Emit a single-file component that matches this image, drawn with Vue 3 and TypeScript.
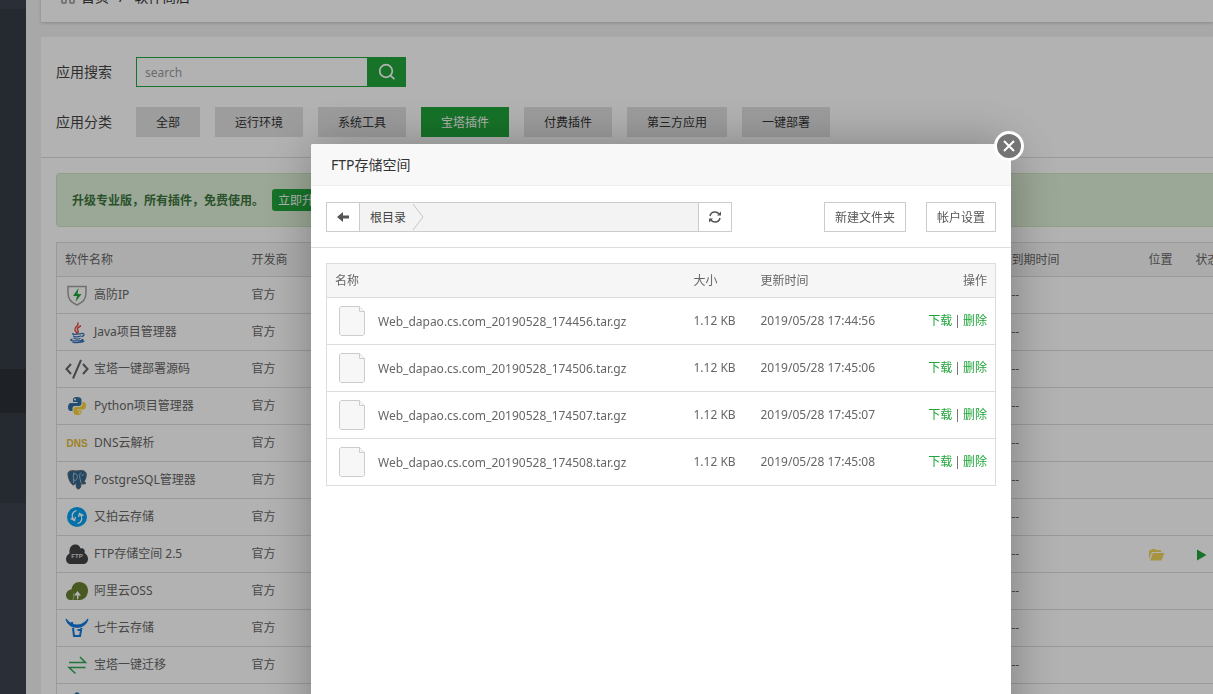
<script setup lang="ts">
import { ref } from 'vue'

interface Plugin {
  name: string
  icon: string
  installed?: boolean
}

interface StoredFile {
  name: string
  size: string
  time: string
}

const keyword = ref('')
const activeCategory = ref('宝塔插件')

const categories: string[] = ['全部', '运行环境', '系统工具', '宝塔插件', '付费插件', '第三方应用', '一键部署']

const plugins: Plugin[] = [
  { name: '高防IP', icon: 'shield' },
  { name: 'Java项目管理器', icon: 'java' },
  { name: '宝塔一键部署源码', icon: 'code' },
  { name: 'Python项目管理器', icon: 'python' },
  { name: 'DNS云解析', icon: 'dns' },
  { name: 'PostgreSQL管理器', icon: 'postgres' },
  { name: '又拍云存储', icon: 'upyun' },
  { name: 'FTP存储空间 2.5', icon: 'ftp', installed: true },
  { name: '阿里云OSS', icon: 'oss' },
  { name: '七牛云存储', icon: 'qiniu' },
  { name: '宝塔一键迁移', icon: 'migrate' },
]

const files: StoredFile[] = [
  { name: 'Web_dapao.cs.com_20190528_174456.tar.gz', size: '1.12 KB', time: '2019/05/28 17:44:56' },
  { name: 'Web_dapao.cs.com_20190528_174506.tar.gz', size: '1.12 KB', time: '2019/05/28 17:45:06' },
  { name: 'Web_dapao.cs.com_20190528_174507.tar.gz', size: '1.12 KB', time: '2019/05/28 17:45:07' },
  { name: 'Web_dapao.cs.com_20190528_174508.tar.gz', size: '1.12 KB', time: '2019/05/28 17:45:08' },
]
</script>

<template>
  <div class="app">
    <aside class="sidebar">
      <div class="side-top"></div>
      <div class="side-menu"></div>
      <div class="side-active"></div>
      <div class="side-more"></div>
    </aside>

    <main class="main">
      <nav class="crumb">
        <svg class="crumb-icon" viewBox="0 0 14 14" width="14" height="14" fill="none" stroke="#aaa" stroke-width="2">
          <rect x="1" y="1" width="4" height="4" rx="1" /><rect x="9" y="1" width="4" height="4" rx="1" />
          <rect x="1" y="8" width="4" height="5" rx="1" /><rect x="9" y="8" width="4" height="5" rx="1" />
        </svg>
        <a href="#">首页</a><span class="slash">/</span><span>软件商店</span>
      </nav>

      <section class="panel">
        <div class="filters">
          <form class="filter-row" @submit.prevent>
            <label class="filter-label" for="soft-search">应用搜索</label>
            <input id="soft-search" v-model="keyword" class="search-input" type="text" placeholder="search" />
            <button class="search-btn" type="submit" aria-label="搜索">
              <svg viewBox="0 0 18 18" width="18" height="18" fill="none" stroke="#fff" stroke-width="1.700">
                <circle cx="8" cy="8" r="6.300" /><path d="M12.300 12.300L16.500 16.200" />
              </svg>
            </button>
          </form>
          <div class="filter-row">
            <span class="filter-label">应用分类</span>
            <div class="tabs">
              <button
                v-for="c in categories"
                :key="c"
                type="button"
                class="tab"
                :class="{ on: c === activeCategory }"
                @click="activeCategory = c"
              >{{ c }}</button>
            </div>
          </div>
        </div>

        <div class="content">
          <div class="banner">
            <strong>升级专业版，所有插件，免费使用。</strong>
            <button type="button" class="upgrade">立即升级</button>
          </div>

          <table class="soft">
            <colgroup>
              <col class="c-name" /><col class="c-dev" /><col class="c-end" /><col class="c-loc" /><col class="c-state" />
            </colgroup>
            <thead>
              <tr><th>软件名称</th><th>开发商</th><th>到期时间</th><th>位置</th><th>状态</th></tr>
            </thead>
            <tbody>
              <tr v-for="p in plugins" :key="p.icon">
                <td>
                  <div class="soft-name">
                    <svg class="soft-icon" viewBox="0 0 24 24" width="24" height="24">
                      <g v-if="p.icon === 'shield'">
                        <path d="M3 3.5H21V10C21 16 17 20 12 22C7 20 3 16 3 10Z" fill="none" stroke="#a0a0a0" stroke-width="1.500" />
                        <path d="M13.500 5L8 13H12L10.500 19L16.500 11H12.500Z" fill="#20a53a" />
                      </g>
                      <g v-else-if="p.icon === 'java'" fill="none" stroke-linecap="round">
                        <path d="M13 3C14 6 9 7 10 10C10.400 11 11.500 12 11.500 13M15.500 6C11.500 8 12 9 13 10.500C13.800 12 13 12.500 12.500 13" stroke="#e0433a" stroke-width="1.400" />
                        <path d="M8 13.500C6 14.300 10 15 16 13.700M8.500 16C9 17.200 14 17 15.500 16M9 18.200C10 19.400 14 19.200 15 18.400M7 19C3 20.500 8 21.300 14 20.800C18 20.700 19 20 17 19.500M17 13.500C20 13 19.500 16 17 16.500M8 22.300C12 22.800 18 22.500 19 21.200" stroke="#3b74b8" stroke-width="1.300" />
                      </g>
                      <g v-else-if="p.icon === 'code'" fill="none" stroke="#666" stroke-width="2">
                        <path d="M6 7L1.500 12L6 17M18 7L22.500 12L18 17M16 3L8 21.500" />
                      </g>
                      <g v-else-if="p.icon === 'python'">
                        <path d="M12 3C8.500 3 8 4.500 8 6V8H12.500V9H6C4 9 3 11 3 13C3 15.500 4 17 6 17H7.500V14.500C7.500 12.500 9 12 10 12H14C15.500 12 16.500 11 16.500 9.500V6C16.500 4 15 3 12 3Z" fill="#34709f" />
                        <path d="M12.500 21C16 21 16.500 19.500 16.500 18V16.500H12V15.500H18C20 15.500 21 14 21 11.500C21 9 20 8 18 8H17.500V10C17.500 12 16 13 14.500 13H11C9.500 13 8.500 14 8.500 15.500V18C8.500 20 10 21 12.500 21Z" fill="#fbcf32" />
                        <circle cx="10" cy="5.500" r="1" fill="#fff" /><circle cx="14.700" cy="18.600" r="1" fill="#fff" />
                      </g>
                      <text v-else-if="p.icon === 'dns'" x="12" y="16" class="icon-dns">DNS</text>
                      <g v-else-if="p.icon === 'postgres'" stroke-linejoin="round">
                        <path d="M4 3.500C7 2 10 3 12 3C15 2 20 2 21 5C22 8 20 12 19 14L21 15C19 17 17 15.500 16 15.500C16 19 15.500 20.500 13.500 21C11.500 21.300 11 19 11 15L8.500 17C6 17 3 10 3 6C3 5 3.300 4 4 3.500Z" fill="#336791" stroke="#666" />
                        <path d="M9 4.500C7.500 8 9 11 8.500 15M9 6C12 5 13 8 12 10.500C11.500 12 10.500 13 9 12M16 4.500C13.500 7 15 10 16 15M16.500 7.500L19 6.500" fill="none" stroke="#aebfcc" />
                      </g>
                      <g v-else-if="p.icon === 'upyun'">
                        <circle cx="12" cy="12" r="10" fill="#05a2f2" />
                        <path d="M11.500 5.500C6.500 7 6 12 9 15M5.500 13.500L9.500 15.500L10.500 12M12.500 18.500C17.500 17 18 12 15 9M18.500 10.500L14.500 8.500L13.500 12" fill="none" stroke="#fff" stroke-width="1.300" />
                      </g>
                      <g v-else-if="p.icon === 'ftp'">
                        <path d="M6 22C3 22 1 20 1 17C1 14.500 2.500 12.500 4.500 11.500C4 6.500 6 3 9.500 2.500C13 2 15 4 15.500 6.500C18.500 5.500 20.500 8 19.500 11C22 12.500 23 14.500 23 17C23 20 21 22 18 22Z" fill="#444" />
                        <text x="12" y="16" class="icon-ftp">FTP</text>
                      </g>
                      <g v-else-if="p.icon === 'oss'">
                        <path d="M6 21C3 21 1 19 1 16C1 13 3.500 10.500 6.500 10.500C7 6 10 3 14.500 3C19.500 3 23 7 23 11.500C23 16.500 19.500 21 14.500 21Z" fill="#678130" />
                        <path d="M12 20V16.500H9L12.500 12L16 16.500H13.500V19L12 21Z" fill="#fff" />
                        <path d="M8.500 14C9 17 9 20 7 22" fill="none" stroke="#fff" stroke-opacity="0.500" />
                      </g>
                      <g v-else-if="p.icon === 'qiniu'" fill="none" stroke="#147ae0">
                        <path d="M1 3C4 14 20 14 23 3C17.500 11 6.500 11 1 3Z" fill="#147ae0" stroke-width="1.200" />
                        <path d="M7 6L7.500 11M8 12L9 20H15L16.500 12M12.500 14H16" stroke-width="2" />
                      </g>
                      <g v-else fill="none" stroke="#2fa84f" stroke-width="1.500">
                        <path d="M4 9.500H20.500L15 4M20.500 14.500H4L10.500 20.500" />
                      </g>
                    </svg>
                    <span>{{ p.name }}</span>
                  </div>
                </td>
                <td>官方</td>
                <td>--</td>
                <td>
                  <svg v-if="p.installed" class="cell-icon" viewBox="0 0 16 12" width="16" height="12" fill="#f0d55c">
                    <path d="M0 10V2L1 1H2L3 0H6L7 1H12V3H3L0 10Z" /><path d="M4 4H15.500L12.500 11.500H1Z" />
                  </svg>
                </td>
                <td>
                  <svg v-if="p.installed" class="cell-icon" viewBox="0 0 12 12" width="12" height="12" fill="#20a53a">
                    <path d="M1 0.500L10.500 6L1 11.500Z" />
                  </svg>
                </td>
              </tr>
              <tr>
                <td>
                  <svg viewBox="0 0 24 24" width="24" height="24" fill="#2482a5">
                    <path d="M12 2C15 3 20 9 20 14C20 19 16 22 12 22C8 22 4 19 4 14C4 9 9 3 12 2Z" />
                  </svg>
                </td>
                <td></td><td></td><td></td><td></td>
              </tr>
            </tbody>
          </table>
        </div>
      </section>
    </main>

    <div class="shade"></div>

    <div class="dialog" role="dialog" aria-labelledby="dialog-title">
      <h2 id="dialog-title" class="dialog-title">FTP存储空间</h2>
      <button type="button" class="close" aria-label="关闭">
        <svg viewBox="0 0 12 12" width="12" height="12" fill="none" stroke="#fff" stroke-width="2">
          <path d="M1 1L11 11M11 1L1 11" />
        </svg>
      </button>

      <div class="toolbar">
        <div class="path">
          <button type="button" class="path-btn" aria-label="返回">
            <svg viewBox="0 0 12 10" width="12" height="10" fill="#555"><path d="M0 5L6 0V3.500H12V6.500H6V10Z" /></svg>
          </button>
          <div class="path-body">
            <a href="#">根目录</a>
            <svg viewBox="0 0 12 28" width="12" height="28" fill="none" stroke="#c5c5d0"><path d="M1 1L11 14L1 27" /></svg>
          </div>
          <button type="button" class="path-btn refresh" aria-label="刷新">
            <svg viewBox="0 0 12 12" width="12" height="12" fill="none" stroke="#555" stroke-width="1.500">
              <path d="M1 5C1.500 2.500 3.500 1 6 1C8 1 9.200 1.800 10.200 3M11 7C10.500 9.500 8.500 11 6 11C4 11 2.800 10.200 1.800 9" />
              <path d="M12 0.500V4.500H8ZM0 11.500V7.500H4Z" fill="#555" stroke="none" />
            </svg>
          </button>
        </div>
        <div class="actions">
          <button type="button" class="plain">新建文件夹</button>
          <button type="button" class="plain">帐户设置</button>
        </div>
      </div>

      <div class="files-wrap">
        <table class="files">
          <colgroup><col class="f-name" /><col class="f-size" /><col /><col class="f-op" /></colgroup>
          <thead>
            <tr><th>名称</th><th>大小</th><th>更新时间</th><th class="right">操作</th></tr>
          </thead>
          <tbody>
            <tr v-for="f in files" :key="f.name">
              <td>
                <div class="file-name">
                  <svg viewBox="0 0 26 30" width="26" height="30" fill="#f7f7f7" stroke="#ccc">
                    <path d="M2 0.500H20.500L25.500 5.500V28L24 29.500H2L0.500 28V2Z" />
                    <path d="M20.500 0.500V5.500H25.500" />
                  </svg>
                  <span>{{ f.name }}</span>
                </div>
              </td>
              <td>{{ f.size }}</td>
              <td>{{ f.time }}</td>
              <td>
                <div class="ops"><a href="#">下载</a><span>|</span><a href="#">删除</a></div>
              </td>
            </tr>
          </tbody>
        </table>
      </div>
    </div>
  </div>
</template>

<style>
html,
body {
  margin: 0;
  height: 100%;
  overflow: hidden;
}
#app {
  height: 100%;
}
</style>

<style scoped>
.app {
  display: flex;
  height: 100vh;
  overflow: hidden;
  background: #f1f1f1;
  color: #666;
  font: 12px/18px "Noto Sans", "Noto Sans CJK SC", sans-serif;
}
.app *,
.app *::before {
  box-sizing: border-box;
}
button,
input {
  font: inherit;
  margin: 0;
  border-radius: 0;
}
button {
  display: inline-flex;
  align-items: center;
  justify-content: center;
  padding: 0;
  border: 0;
  cursor: pointer;
}
a {
  color: inherit;
  text-decoration: none;
}
svg {
  display: block;
  flex: none;
}
th {
  font-weight: 400;
  text-align: left;
}

.sidebar {
  display: flex;
  flex-direction: column;
  flex: none;
  width: 26px;
  background: #3d444f;
}
.side-top {
  height: 9px;
}
.side-menu {
  height: 360px;
  background: #363d47;
}
.side-active {
  height: 44px;
  background: #2c3138;
}
.side-more {
  height: 90px;
  background: #363d47;
}

.main {
  flex: 1;
  min-width: 0;
  padding-left: 15px;
}
.crumb {
  display: flex;
  align-items: center;
  height: 50px;
  margin-top: -28px;
  padding-left: 20px;
  background: #fff;
  box-shadow: 0 1px 3px rgba(0, 0, 0, 0.2);
  color: #333;
  font-size: 14px;
}
.crumb-icon {
  margin-right: 6px;
}
.slash {
  margin: 0 10px;
}
.panel {
  margin-top: 15px;
  background: #fff;
}
.filters {
  display: flex;
  flex-direction: column;
  gap: 20px;
  padding: 20px 15px;
  border-bottom: 1px solid #ddd;
}
.filter-row {
  display: flex;
  align-items: center;
  height: 30px;
}
.filter-label {
  width: 80px;
  color: #444;
  font-size: 14px;
}
.search-input {
  width: 231px;
  height: 30px;
  padding: 0 8px;
  border: 1px solid #20a53a;
  border-right: 0;
  background: #fff;
  color: #555;
  outline: 0;
}
.search-input::placeholder {
  color: #999;
}
.search-btn {
  width: 39px;
  height: 30px;
  background: #20a53a;
}
.tabs {
  display: flex;
  gap: 15px;
}
.tab {
  height: 30px;
  padding: 2px 20px 0;
  background: #e1e1e1;
  color: #333;
  white-space: nowrap;
}
.tab.on {
  background: #20a53a;
  color: #fff;
}

.content {
  padding: 15px 0 0 15px;
  overflow: hidden;
}
.banner {
  display: flex;
  align-items: center;
  height: 54px;
  margin-bottom: 15px;
  padding: 0 15px;
  border: 1px solid #d0e6be;
  border-right: 0;
  border-radius: 4px 0 0 4px;
  background: #dff0d8;
  color: #3c763d;
}
.banner strong {
  padding-top: 2px;
}
.upgrade {
  height: 22px;
  margin-left: 8px;
  padding: 2px 6px 0;
  border-radius: 3px;
  background: #20a53a;
  color: #fff;
}
.soft {
  width: 1240px;
  border: 1px solid #ddd;
  border-collapse: collapse;
  table-layout: fixed;
}
.c-name {
  width: 187px;
}
.c-dev {
  width: 760px;
}
.c-end {
  width: 137px;
}
.c-loc {
  width: 47px;
}
.soft th {
  height: 34px;
  padding: 0 8px;
  background: #f6f6f6;
  white-space: nowrap;
}
.soft td {
  height: 37px;
  padding: 0 8px;
  border-top: 1px solid #ddd;
}
.soft-name {
  display: flex;
  align-items: center;
  gap: 5px;
}
.cell-icon {
  margin-top: 2px;
}
.icon-dns {
  fill: #e5b935;
  font: bold 10px "Liberation Sans", sans-serif;
  text-anchor: middle;
}
.icon-ftp {
  fill: #ddd;
  font: bold 6px "Liberation Sans", sans-serif;
  text-anchor: middle;
}

.shade {
  position: fixed;
  inset: 0;
  background: rgba(0, 0, 0, 0.3);
}

.dialog {
  position: fixed;
  top: 144px;
  bottom: -60px;
  left: 311px;
  width: 700px;
  border-radius: 2px;
  background: #fff;
  box-shadow: 1px 1px 50px rgba(0, 0, 0, 0.3);
}
.dialog-title {
  height: 42px;
  margin: 0;
  padding: 0 20px;
  border-bottom: 1px solid #eee;
  border-radius: 2px 2px 0 0;
  background: #f8f8f8;
  color: #333;
  font-size: 14px;
  font-weight: 400;
  line-height: 42px;
}
.close {
  position: absolute;
  top: -13px;
  right: -13px;
  width: 30px;
  height: 30px;
  border: 3px solid #fff;
  border-radius: 50%;
  background: #757575;
}
.toolbar {
  display: flex;
  align-items: center;
  justify-content: space-between;
  padding: 16px 15px 15px;
  border-bottom: 1px solid #ddd;
}
.path {
  display: flex;
  width: 406px;
  height: 30px;
  border: 1px solid #ccc;
}
.path-btn {
  width: 33px;
  border-right: 1px solid #ccc;
  background: #fff;
}
.path-btn.refresh {
  border-right: 0;
  border-left: 1px solid #ccc;
}
.path-body {
  display: flex;
  flex: 1;
  align-items: center;
  gap: 6px;
  padding-left: 10px;
  background: #f3f3f3;
  color: #444;
}
.path-body a {
  padding-top: 2px;
}
.actions {
  display: flex;
  gap: 20px;
}
.plain {
  height: 30px;
  padding: 2px 10px 0;
  border: 1px solid #ccc;
  background: #fff;
  color: #555;
  white-space: nowrap;
}
.files-wrap {
  padding: 15px;
}
.files {
  width: 100%;
  border: 1px solid #ddd;
  border-collapse: collapse;
  table-layout: fixed;
}
.f-name {
  width: 359px;
}
.f-size {
  width: 67px;
}
.f-op {
  width: 100px;
}
.files th {
  height: 34px;
  padding: 0 8px;
  background: #f6f6f6;
}
.files td {
  height: 47px;
  padding: 0 8px;
  border-top: 1px solid #ddd;
}
.files .right {
  text-align: right;
}
.files a {
  color: #20a53a;
}
.ops {
  display: flex;
  justify-content: flex-end;
  gap: 2px;
}
.file-name {
  display: flex;
  align-items: center;
  gap: 13px;
  padding-left: 4px;
}
.file-name span {
  padding-top: 2px;
}
</style>
